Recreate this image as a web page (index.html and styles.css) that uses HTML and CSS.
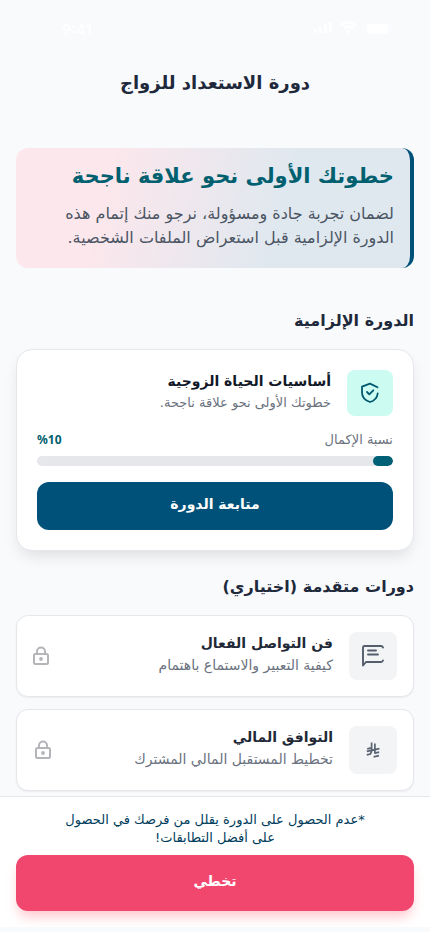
FILE: index.html
```html
<!DOCTYPE html>
<html lang="ar" dir="rtl">
<head>
<meta charset="utf-8">
<meta name="viewport" content="width=device-width, initial-scale=1">
<title>دورة الاستعداد للزواج</title>
<link rel="stylesheet" href="styles.css">
</head>
<body>
<div class="status" dir="ltr">
  <span class="clock">9:41</span>
  <svg class="signals" width="80" height="14" viewBox="0 0 80 14" fill="#fff" aria-hidden="true">
    <rect x="2" y="8" width="3" height="4" rx="1"/><rect x="7" y="6" width="3" height="6" rx="1"/><rect x="12" y="3" width="3" height="9" rx="1"/><rect x="17" y="1" width="3" height="11" rx="1"/>
    <path d="M29 4.500q7-6 15 0M32 7.500q4.500-4 9 0" fill="none" stroke="#fff" stroke-width="2.600"/><path d="M33.500 10q3-2.500 6 0l-3 3z"/>
    <rect x="53" y="1" width="24" height="12" rx="3" fill="none" stroke="#fff" stroke-opacity=".4"/><rect x="55" y="3" width="21" height="9" rx="2"/><path d="M78 5v4q3-2 0-4" opacity=".5"/>
  </svg>
</div>
<header class="topbar"><h1>دورة الاستعداد للزواج</h1></header>
<main class="content">
  <section class="banner">
    <h2>خطوتك الأولى نحو علاقة ناجحة</h2>
    <p>لضمان تجربة جادة ومسؤولة، نرجو منك إتمام هذه<br>الدورة الإلزامية قبل استعراض الملفات الشخصية.</p>
  </section>
  <h2 class="section-title first">الدورة الإلزامية</h2>
  <article class="course">
    <div class="course-head">
      <span class="tile mint">
        <svg width="24" height="24" viewBox="0 0 24 24" fill="none" stroke="#00586f" stroke-width="1.8" stroke-linecap="round" stroke-linejoin="round" aria-hidden="true"><path d="M19.500 6.300L12 2.600 4 5.700v5.800c0 4.700 3.500 8 8 9.500 4.300-1.100 7.200-4.300 7.700-8.500M9 11l2.300 2.300 4-4"/></svg>
      </span>
      <div class="copy">
        <h3>أساسيات الحياة الزوجية</h3>
        <p>خطوتك الأولى نحو علاقة ناجحة.</p>
      </div>
    </div>
    <div class="progress-label"><span id="progress-name">نسبة الإكمال</span><strong dir="ltr">%10</strong></div>
    <div class="track" role="progressbar" aria-labelledby="progress-name" aria-valuenow="10" aria-valuemin="0" aria-valuemax="100"><div class="fill"></div></div>
    <button class="primary" type="button">متابعة الدورة</button>
  </article>
  <h2 class="section-title">دورات متقدمة (اختياري)</h2>
  <div class="locked-list">
    <article class="locked">
      <span class="tile">
        <svg width="24" height="24" viewBox="0 0 24 24" fill="none" stroke="#535d6c" stroke-width="1.9" stroke-linecap="round" stroke-linejoin="round" aria-hidden="true"><path d="M22 3.500Q21.500 2 20 2H3.500Q2 2 2 3.500V21.500L5 18H20Q21.500 18 22 16.500M7 6.500h8M7 10.500h10"/></svg>
      </span>
      <div class="copy"><h3>فن التواصل الفعال</h3><p>كيفية التعبير والاستماع باهتمام</p></div>
      <svg class="lock" width="16" height="20" viewBox="0 0 16 20" fill="none" stroke="#b4b4b9" stroke-width="2" stroke-linejoin="round" aria-hidden="true"><rect x="1" y="8" width="14" height="10" rx="1.500"/><path d="M4 8V5.500a4 4 0 0 1 8 0V8"/><circle cx="8" cy="13" r="1.900" fill="#b4b4b9" stroke="none"/></svg>
    </article>
    <article class="locked finance">
      <span class="tile">
        <svg width="14" height="16" viewBox="0 0 14 16" fill="none" stroke="#5b6472" stroke-width="1.700" aria-hidden="true"><path d="M5.600 .5v9L4.300 12 .8 12.800M8.900 1.500v10.200M.8 9.300l12.600-2.700M8.900 11.100l4.300-.9M7.600 14.800l5.400-1.100M1.200 6.800l4.400-1"/></svg>
      </span>
      <div class="copy"><h3>التوافق المالي</h3><p>تخطيط المستقبل المالي المشترك</p></div>
      <svg class="lock" width="16" height="20" viewBox="0 0 16 20" fill="none" stroke="#b4b4b9" stroke-width="2" stroke-linejoin="round" aria-hidden="true"><rect x="1" y="8" width="14" height="10" rx="1.500"/><path d="M4 8V5.500a4 4 0 0 1 8 0V8"/><circle cx="8" cy="13" r="1.900" fill="#b4b4b9" stroke="none"/></svg>
    </article>
  </div>
</main>
<footer class="footer">
  <p>*عدم الحصول على الدورة يقلل من فرصك في الحصول<br>على أفضل التطابقات!</p>
  <button class="skip" type="button">تخطي</button>
</footer>
</body>
</html>
```
FILE: styles.css
```css
* { box-sizing: border-box; }
body {
  margin: 0;
  background: #f9fafc;
  color: #1e293b;
  font-family: "DejaVu Sans", sans-serif;
}
h1, h2, h3, p { margin: 0; }
button { font-family: inherit; border: 0; display: block; width: 100%; cursor: pointer; color: #fff; font-weight: 700; }
.status {
  display: flex;
  justify-content: space-between;
  align-items: center;
  height: 56px;
  padding: 0 38px 0 62px;
  color: #fff;
}
.clock { font: 500 15px/24px Inter, sans-serif; padding-top: 4px; }
.topbar { height: 54px; display: flex; align-items: center; justify-content: center; }
.topbar h1 { font-size: 18px; line-height: 28px; }
.content { padding: 38px 16px 5px; }
.banner {
  min-height: 120px;
  padding: 10px 16px 18px;
  border-right: 4px solid #00517a;
  border-radius: 12px;
  background: linear-gradient(105deg, #fce7ec 22%, #e0e8ef 66%);
}
.banner h2 { font-size: 21px; line-height: 36px; color: #00606f; margin-bottom: 8px; }
.banner p { font-size: 16px; line-height: 24px; color: #4b5563; white-space: nowrap; }
.section-title { font-size: 16px; line-height: 28px; margin: 22px 0 14px; }
.section-title.first { margin-top: 39px; }
.course {
  padding: 20px;
  border: 1px solid #e5e7eb;
  border-radius: 16px;
  background: #fff;
  box-shadow: 0 8px 16px -4px rgba(0, 0, 0, .12);
}
.course-head { display: flex; gap: 16px; }
.tile {
  flex: none;
  width: 48px;
  height: 48px;
  display: grid;
  place-items: center;
  border-radius: 8px;
  background: #f3f4f6;
}
.mint { width: 46px; height: 46px; background: #ccfbf1; }
.copy { flex: 1; white-space: nowrap; }
.copy h3 { font-size: 14px; line-height: 22px; color: #1f2937; }
.copy p { font-size: 14px; line-height: 22px; color: #6b7280; }
.course h3 { color: #111827; }
.course .copy p { font-size: 13px; }
.progress-label {
  display: flex;
  justify-content: space-between;
  margin: 14px 0 6px;
  font-size: 13px;
  line-height: 20px;
  color: #6b7280;
}
.progress-label strong { color: #00606f; font-size: 12px; font-family: "Noto Sans", sans-serif; }
.track { height: 10px; border-radius: 5px; background: #e5e7eb; overflow: hidden; }
.fill { width: 20px; height: 10px; border-radius: 5px; background: #006075; }
.primary { height: 48px; margin-top: 16px; border-radius: 12px; background: #00517a; font-size: 14px; padding: 0 0 4px; }
.locked-list { display: grid; gap: 12px; }
.locked {
  display: flex;
  align-items: center;
  gap: 16px;
  height: 82px;
  padding: 0 16px;
  border: 1px solid #e5e7eb;
  border-radius: 12px;
  background: #fff;
  box-shadow: 0 1px 2px rgba(0, 0, 0, .06);
}
.locked .copy { padding-bottom: 4px; }
.finance { padding-left: 18px; }
.footer {
  padding: 14px 16px 16px;
  border-top: 1px solid #e5e7eb;
  background: #fff;
}
.footer p { font-size: 13px; line-height: 18px; text-align: center; color: #003d5c; margin-bottom: 8px; }
.skip { height: 56px; border-radius: 12px; background: #f1476f; font-size: 14px; padding: 0 0 4px; box-shadow: 0 8px 12px -2px rgba(255, 80, 100, .3); }
```
